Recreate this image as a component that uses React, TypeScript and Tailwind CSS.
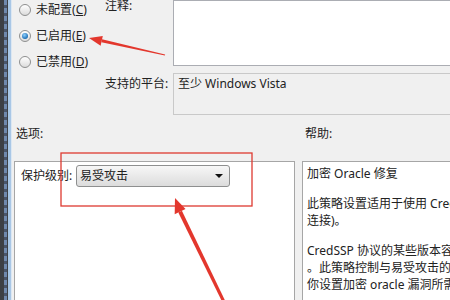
import React from 'react';

const font = '[font-family:"Noto_Sans","Noto_Sans_CJK_SC",sans-serif]';

interface RadioItem {
  label: string;
  key: string;
  checked: boolean;
}

const radios: RadioItem[] = [
  { label: '未配置', key: 'C', checked: false },
  { label: '已启用', key: 'E', checked: true },
  { label: '已禁用', key: 'D', checked: false },
];

const helpParagraphs: string[][] = [
  ['加密 Oracle 修复'],
  ['此策略设置适用于使用 CredSSP 身份验证的应用程序(例如远程桌面', '连接)。'],
  [
    'CredSSP 协议的某些版本容易受到针对客户端的加密 oracle 攻击',
    '。此策略控制与易受攻击的客户端和服务器的兼容性。此策略允许',
    '你设置加密 oracle 漏洞所需的保护级别。',
  ],
];

const Radio: React.FC<{ item: RadioItem }> = ({ item }) => (
  <div className="flex items-center h-[20px] gap-[5px]">
    <div className="w-[12px] h-[12px] rounded-full border border-[#8e8f8f] bg-gradient-to-b from-[#ffffff] to-[#dcdcdc] flex items-center justify-center">
      {item.checked && (
        <div className="w-[6px] h-[6px] rounded-full bg-[radial-gradient(circle_at_40%_35%,#8fd0ff,#1c6fb5_70%)]" />
      )}
    </div>
    <span className="text-[12px] leading-[14px] text-[#222]">
      {item.label}(<span className="underline">{item.key}</span>)
    </span>
  </div>
);

export default function App() {
  return (
    <div className={`relative w-[450px] h-[300px] overflow-hidden flex bg-[#f0f0f0] ${font}`}>
      {/* window frame on the left */}
      <div className="w-[4px] bg-[#3d3f44]" />
      <div className="w-[3px] bg-[repeating-linear-gradient(180deg,#6f88ad_0px,#6f88ad_5px,#4a556a_5px,#4a556a_8px)]" />
      <div className="w-[1px] bg-[#3d3f44]" />
      <div className="w-[3px] bg-[#a9c7e6]" />
      <div className="w-[1px] bg-[#dce7f2]" />

      <div className="flex-1 flex flex-col min-w-0">
        {/* top: state radios, comment, platform */}
        <div className="flex h-[115px]">
          <div className="w-[92px] pl-[7px] flex flex-col gap-[6px]">
            {radios.map((r) => (
              <Radio key={r.key} item={r} />
            ))}
          </div>
          <div className="flex-1 flex flex-col">
            <div className="flex h-[66px]">
              <div className="w-[69px] pl-[1px] mt-[-1px] text-[12px] leading-[14px] text-[#222]">注释:</div>
              <div className="flex-1 bg-white border border-r-0 border-[#abadb3]" />
            </div>
            <div className="flex h-[42px] mt-[7px]">
              <div className="w-[69px] pl-[1px] pt-[4px] text-[12px] leading-[14px] text-[#222]">支持的平台:</div>
              <div className="flex-1 border border-r-0 border-[#c9c9c9] pl-[4px] pt-[3px] text-[12px] leading-[14px] text-[#222]">
                至少 Windows Vista
              </div>
            </div>
          </div>
        </div>

        {/* bottom: options and help */}
        <div className="flex flex-1 min-h-0">
          <div className="w-[290px] flex flex-col">
            <div className="h-[46px] pl-[4px] pt-[12px] text-[12px] leading-[14px] text-[#222]">选项:</div>
            <div className="ml-[2px] w-[281px] flex-1 bg-white border border-b-0 border-[#a6a6a6] pt-[3px] pl-[6px]">
              <div className="flex items-center h-[22px]">
                <span className="w-[55px] text-[12px] leading-[14px] text-[#222]">保护级别:</span>
                <div className="w-[154px] h-[22px] flex items-center justify-between pl-[3px] pr-[6px] border border-[#8e8f8f] rounded-[3px] bg-gradient-to-b from-[#f7f7f7] to-[#dcdcdc]">
                  <span className="text-[12px] leading-[14px] text-[#222]">易受攻击</span>
                  <div className="w-0 h-0 border-l-[4px] border-r-[4px] border-t-[4px] border-l-transparent border-r-transparent border-t-[#111]" />
                </div>
              </div>
            </div>
          </div>
          <div className="flex-1 flex flex-col min-w-0">
            <div className="h-[46px] pl-[3px] pt-[12px] text-[12px] leading-[14px] text-[#222]">帮助:</div>
            <div className="flex-1 bg-white border border-r-0 border-b-0 border-[#a6a6a6] pl-[4px] pt-[3px] overflow-hidden">
              {helpParagraphs.map((p, i) => (
                <div key={i} className={i > 0 ? 'mt-[13px]' : ''}>
                  {p.map((line, j) => (
                    <div key={j} className="whitespace-nowrap text-[12px] leading-[17px] text-[#222]">
                      {line}
                    </div>
                  ))}
                </div>
              ))}
            </div>
          </div>
        </div>
      </div>

      {/* annotation: red box and arrows */}
      <svg className="absolute inset-0 pointer-events-none" width="450" height="300" viewBox="0 0 450 300">
        <rect x="61" y="153" width="191" height="53" fill="none" stroke="#de3a30" strokeWidth="1.3" />
        <polygon points="89,38 102.8,35.9 100.6,45.7" fill="#e3372d" />
        <polygon points="102,39.3 101.4,42.3 164.9,55.5 165.1,54.5" fill="#e3372d" />
        <polygon points="175,198 185.5,209 174.7,214.2" fill="#e3372d" />
        <polygon points="181.9,210.7 178.3,212.5 222.6,302.7 225.4,301.3" fill="#e3372d" />
      </svg>
    </div>
  );
}
